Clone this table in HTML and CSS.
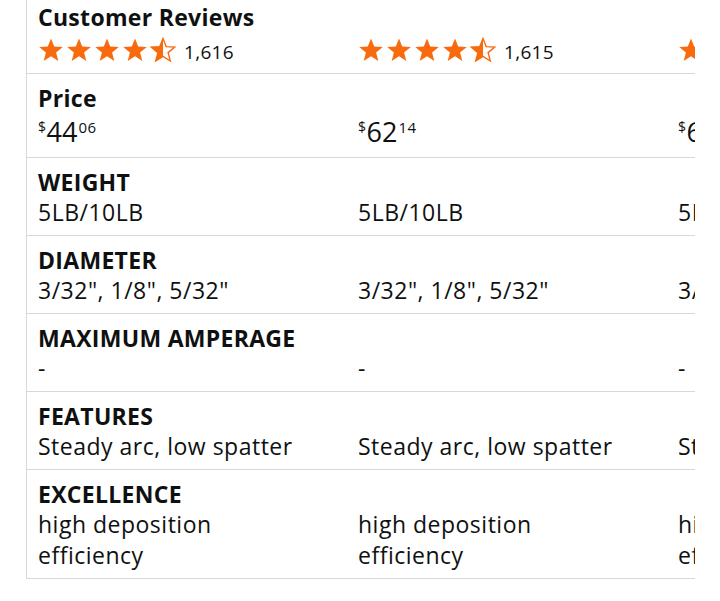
FILE: index.html
```html
<!DOCTYPE html>
<html>
<head>
<meta charset="utf-8">
<link rel="stylesheet" href="styles.css">
</head>
<body>
<svg width="0" height="0" class="defs">
  <defs>
    <path id="star" d="M13 1.5 L16.2 9.6 L24.8 10.1 L18.1 15.6 L20.3 24 L13 19.3 L5.7 24 L7.9 15.6 L1.2 10.1 L9.8 9.6 Z"/>
    <clipPath id="halfclip"><rect x="0" y="0" width="13" height="26"/></clipPath>
  </defs>
</svg>
<div class="table">
  <div class="row row-reviews">
    <div class="label">Customer Reviews</div>
    <div class="cells">
      <div class="cell rating">
        <span class="stars">
          <svg viewBox="0 0 26 26" class="star"><use href="#star"/></svg>
          <svg viewBox="0 0 26 26" class="star"><use href="#star"/></svg>
          <svg viewBox="0 0 26 26" class="star"><use href="#star"/></svg>
          <svg viewBox="0 0 26 26" class="star"><use href="#star"/></svg>
          <svg viewBox="0 0 26 26" class="star half"><use href="#star" class="outline"/><use href="#star" clip-path="url(#halfclip)"/></svg>
        </span>
        <span class="count">1,616</span>
      </div>
      <div class="cell rating">
        <span class="stars">
          <svg viewBox="0 0 26 26" class="star"><use href="#star"/></svg>
          <svg viewBox="0 0 26 26" class="star"><use href="#star"/></svg>
          <svg viewBox="0 0 26 26" class="star"><use href="#star"/></svg>
          <svg viewBox="0 0 26 26" class="star"><use href="#star"/></svg>
          <svg viewBox="0 0 26 26" class="star half"><use href="#star" class="outline"/><use href="#star" clip-path="url(#halfclip)"/></svg>
        </span>
        <span class="count">1,615</span>
      </div>
      <div class="cell rating">
        <span class="stars">
          <svg viewBox="0 0 26 26" class="star"><use href="#star"/></svg>
          <svg viewBox="0 0 26 26" class="star"><use href="#star"/></svg>
          <svg viewBox="0 0 26 26" class="star"><use href="#star"/></svg>
          <svg viewBox="0 0 26 26" class="star"><use href="#star"/></svg>
          <svg viewBox="0 0 26 26" class="star half"><use href="#star" class="outline"/><use href="#star" clip-path="url(#halfclip)"/></svg>
        </span>
        <span class="count">1,202</span>
      </div>
    </div>
  </div>

  <div class="row row-price">
    <div class="label label-price">Price</div>
    <div class="cells">
      <div class="cell price"><span class="sym">$</span><span class="whole">44</span><span class="frac">06</span></div>
      <div class="cell price"><span class="sym">$</span><span class="whole">62</span><span class="frac">14</span></div>
      <div class="cell price"><span class="sym">$</span><span class="whole">69</span><span class="frac">99</span></div>
    </div>
  </div>

  <div class="row">
    <div class="label">WEIGHT</div>
    <div class="cells">
      <div class="cell">5LB/10LB</div>
      <div class="cell">5LB/10LB</div>
      <div class="cell">5LB/10LB</div>
    </div>
  </div>

  <div class="row">
    <div class="label">DIAMETER</div>
    <div class="cells">
      <div class="cell">3/32", 1/8", 5/32"</div>
      <div class="cell">3/32", 1/8", 5/32"</div>
      <div class="cell">3/32", 1/8", 5/32"</div>
    </div>
  </div>

  <div class="row">
    <div class="label">MAXIMUM AMPERAGE</div>
    <div class="cells">
      <div class="cell">-</div>
      <div class="cell">-</div>
      <div class="cell">-</div>
    </div>
  </div>

  <div class="row">
    <div class="label">FEATURES</div>
    <div class="cells">
      <div class="cell">Steady arc, low spatter</div>
      <div class="cell">Steady arc, low spatter</div>
      <div class="cell">Steady arc, low spatter</div>
    </div>
  </div>

  <div class="row">
    <div class="label">EXCELLENCE</div>
    <div class="cells">
      <div class="cell">high deposition efficiency</div>
      <div class="cell">high deposition efficiency</div>
      <div class="cell">high deposition efficiency</div>
    </div>
  </div>
</div>
</body>
</html>
```

FILE: styles.css
```css
html, body {
  margin: 0;
  padding: 0;
  background: #ffffff;
}

body {
  font-family: "Open Sans", "Noto Sans", sans-serif;
  color: #0f1111;
  padding-left: 26px;
}

.defs {
  position: absolute;
  width: 0;
  height: 0;
}

.table {
  width: 668px;
  border-left: 1px solid #d5d9d9;
  overflow: hidden;
}

.row {
  border-bottom: 1px solid #d5d9d9;
  padding: 9px 0 7px 11px;
}

.label {
  font-size: 23px;
  font-weight: 700;
  line-height: 30px;
  letter-spacing: 0.3px;
  white-space: nowrap;
}

.cells {
  display: flex;
  width: 960px;
}

.cell {
  flex: 0 0 320px;
  width: 320px;
  box-sizing: border-box;
  padding-right: 40px;
  font-size: 23px;
  line-height: 31px;
  letter-spacing: 0.5px;
}

.row-reviews {
  padding-top: 2px;
  padding-bottom: 5px;
}

.rating {
  display: flex;
  align-items: center;
  height: 36px;
}

.stars {
  display: flex;
  gap: 2px;
}

.star {
  width: 26px;
  height: 26px;
  fill: #f76b0c;
}

.star .outline {
  fill: none;
  stroke: #f76b0c;
  stroke-width: 1.4;
}

.count {
  margin-left: 8px;
  font-size: 19px;
  line-height: 24px;
  letter-spacing: 0.3px;
  padding-top: 4px;
}

.row-price {
  padding-bottom: 6px;
}

.price {
  display: flex;
  align-items: flex-start;
  line-height: 36px;
}

.price .sym {
  font-size: 14px;
  line-height: 20px;
  margin-top: 4px;
}

.price .whole {
  font-size: 27px;
  line-height: 38px;
  letter-spacing: 0;
}

.price .frac {
  font-size: 15px;
  line-height: 20px;
  margin-top: 4px;
  margin-left: 1px;
}
```
